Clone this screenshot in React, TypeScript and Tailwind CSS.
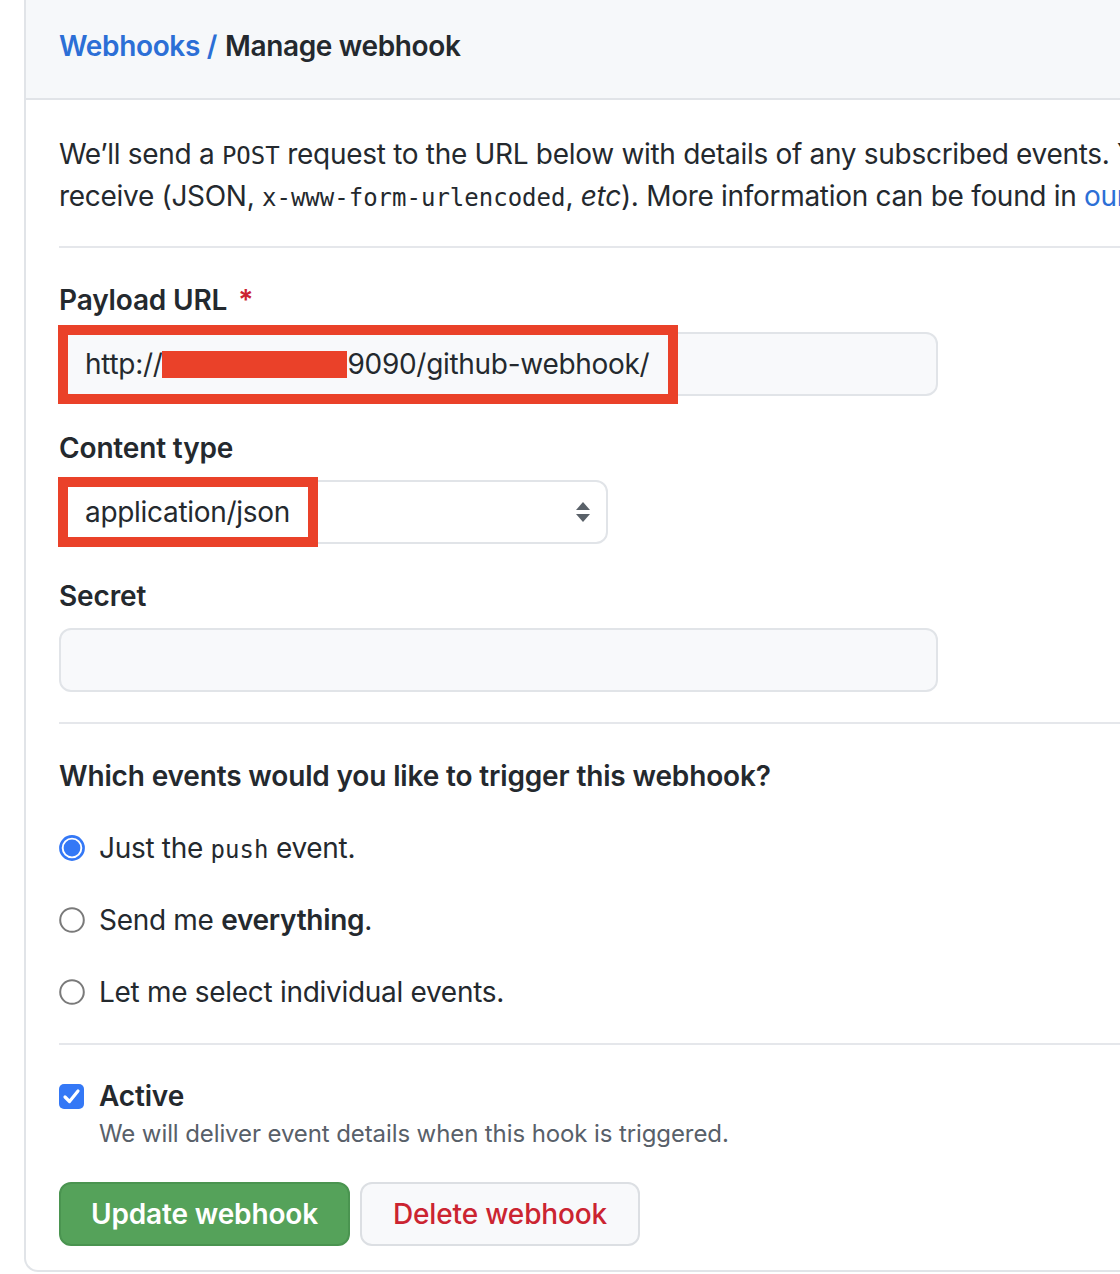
import React from 'react'

const mono = "font-['DejaVu_Sans_Mono','Liberation_Mono',monospace] text-[24px] tracking-normal leading-none"

function Divider({ className = '' }: { className?: string }) {
  return <div className={`h-[2px] bg-[#e5e7eb] ${className}`} />
}

function Radio({ checked }: { checked?: boolean }) {
  return (
    <svg width="26" height="26" viewBox="0 0 26 26" className="shrink-0">
      {checked ? (
        <>
          <circle cx="13" cy="13" r="11.6" fill="#fff" stroke="#3478f6" strokeWidth="2.6" />
          <circle cx="13" cy="13" r="8.4" fill="#3478f6" />
        </>
      ) : (
        <circle cx="13" cy="13" r="11.8" fill="#fff" stroke="#7a7a7a" strokeWidth="2" />
      )}
    </svg>
  )
}

function RadioRow({ checked, children }: { checked?: boolean; children: React.ReactNode }) {
  return (
    <div className="flex items-center h-[40px]">
      <Radio checked={checked} />
      <span className="ml-[14px] whitespace-nowrap">{children}</span>
    </div>
  )
}

export default function App() {
  return (
    <div className="w-[1120px] h-[1274px] overflow-hidden bg-white pl-[24px] text-[#24292e] font-['Inter','Liberation_Sans',sans-serif]">
      <div className="w-[1300px] h-[1272px] border-l-2 border-b-2 border-[#e1e4e8] rounded-bl-[14px] overflow-hidden">
        {/* Header */}
        <div className="h-[100px] bg-[#f6f8fa] border-b-2 border-[#e1e4e8] flex items-center pl-[33px] pb-[6px] text-[28px] font-semibold tracking-[-0.35px]">
          <a className="text-[#2c6fd6]">Webhooks /</a>
          <span className="ml-[8px]">Manage webhook</span>
        </div>

        {/* Body */}
        <div className="pl-[33px] pt-[33px] text-[28px] tracking-[-0.3px]">
          <p className="whitespace-nowrap">
            <span className="flex items-center h-[42px]">
              <span>
                We’ll send a <code className={mono}>POST</code> request to the URL below with details of
                any subscribed events. You can also specify which data format you’d like to
              </span>
            </span>
            <span className="flex items-center h-[42px]">
              <span>
                receive (JSON, <code className={mono}>x-www-form-urlencoded</code>, <em>etc</em>). More
                information can be found in{' '}
                <a className="text-[#2c6fd6]">our developer documentation</a>.
              </span>
            </span>
          </p>

          <Divider className="mt-[29px]" />

          {/* Payload URL */}
          <div className="mt-[32px] leading-[40px] font-semibold tracking-[-0.15px]">
            Payload URL <span className="ml-[4px] text-[#cb2431]">*</span>
          </div>
          <div className="relative mt-[12px] w-[879px] h-[64px] rounded-[12px] border-2 border-[#e1e4e8] bg-[#f8f9fb] flex items-center pl-[24px]">
            <span className="flex items-center whitespace-nowrap">
              http://
              <span className="inline-block w-[185px] h-[27px] bg-[#ea4129]" />
              9090/github-webhook/
            </span>
            <div className="absolute left-[-3px] top-[-9px] w-[620px] h-[79px] border-[10px] border-[#ea4129]" />
          </div>

          {/* Content type */}
          <div className="mt-[32px] leading-[40px] font-semibold tracking-[-0.15px]">Content type</div>
          <div className="relative mt-[12px] w-[549px] h-[64px] rounded-[12px] border-2 border-[#e1e4e8] bg-white flex items-center pl-[24px]">
            <span>application/json</span>
            <svg width="16" height="22" viewBox="0 0 16 22" className="absolute right-[15px] top-[19px]">
              <path d="M8 1 L15 9 L1 9 Z" fill="#5a6169" />
              <path d="M1 13 L15 13 L8 21 Z" fill="#5a6169" />
            </svg>
            <div className="absolute left-[-3px] top-[-5px] w-[260px] h-[70px] border-[10px] border-[#ea4129]" />
          </div>

          {/* Secret */}
          <div className="mt-[32px] leading-[40px] font-semibold tracking-[-0.15px]">Secret</div>
          <div className="mt-[12px] w-[879px] h-[64px] rounded-[12px] border-2 border-[#e1e4e8] bg-[#f8f9fb]" />

          <Divider className="mt-[30px]" />

          {/* Events */}
          <div className="mt-[32px] leading-[40px] font-semibold tracking-[-0.15px]">
            Which events would you like to trigger this webhook?
          </div>
          <div className="mt-[32px] flex flex-col gap-[32px]">
            <RadioRow checked>
              Just the <code className={mono}>push</code> event.
            </RadioRow>
            <RadioRow>
              Send me <strong className="font-semibold">everything</strong>.
            </RadioRow>
            <RadioRow>Let me select individual events.</RadioRow>
          </div>

          <Divider className="mt-[31px]" />

          {/* Active */}
          <div className="mt-[31px] flex items-center h-[40px]">
            <svg width="25" height="25" viewBox="0 0 25 25" className="shrink-0">
              <rect x="0" y="0" width="25" height="25" rx="5" fill="#3478f6" />
              <path d="M6 13 L10.5 17.5 L19 7" fill="none" stroke="#fff" strokeWidth="3.2" strokeLinecap="round" strokeLinejoin="round" />
            </svg>
            <span className="ml-[15px] font-semibold tracking-[-0.15px]">Active</span>
          </div>
          <div className="pl-[40px] leading-[36px] text-[24px] text-[#586069] tracking-[-0.1px]">
            We will deliver event details when this hook is triggered.
          </div>

          {/* Buttons */}
          <div className="mt-[30px] flex gap-[10px] tracking-[-0.15px]">
            <button className="w-[291px] h-[64px] rounded-[12px] bg-[#55a25a] border-2 border-[#4a9450] text-white font-semibold">
              Update webhook
            </button>
            <button className="w-[280px] h-[64px] rounded-[12px] bg-[#f8f9fb] border-2 border-[#dcdfe3] text-[#cb2431] font-medium">
              Delete webhook
            </button>
          </div>
        </div>
      </div>
    </div>
  )
}
